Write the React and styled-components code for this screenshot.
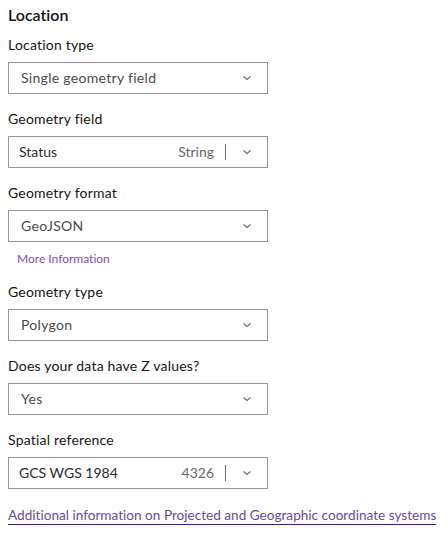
import React from 'react';
import styled, { createGlobalStyle } from 'styled-components';

const GlobalStyle = createGlobalStyle`
  body {
    margin: 0;
    background: #ffffff;
    font-family: Lato, "Noto Sans", sans-serif;
    font-variant-ligatures: none;
    color: #151515;
  }
`;

function Chevron() {
  return (
    <svg width="12" height="12" viewBox="0 0 12 12">
      <polyline points="2.5,4.5 6,7.5 9.5,4.5" fill="none" stroke="#6a6a6a" strokeWidth="1.1" />
    </svg>
  );
}

function Select({ value, hint, combo }) {
  return (
    <Box combo={combo}>
      <Value combo={combo}>{value}</Value>
      {hint && <Hint>{hint}</Hint>}
      {hint && <Divider />}
      <ChevronSlot><Chevron /></ChevronSlot>
    </Box>
  );
}

function Field({ label, children }) {
  return (
    <FieldWrap>
      <Label>{label}</Label>
      {children}
    </FieldWrap>
  );
}

function App() {
  return (
    <Panel>
      <GlobalStyle />
      <Heading>Location</Heading>
      <Field label="Location type">
        <Select value="Single geometry field" />
      </Field>
      <Field label="Geometry field">
        <Select value="Status" hint="String" combo />
      </Field>
      <Field label="Geometry format">
        <Select value="GeoJSON" />
        <SmallLink>More Information</SmallLink>
      </Field>
      <Field label="Geometry type">
        <Select value="Polygon" />
      </Field>
      <Field label="Does your data have Z values?">
        <Select value="Yes" />
      </Field>
      <Field label="Spatial reference">
        <Select value="GCS WGS 1984" hint="4326" combo />
        <WideLink>Additional information on Projected and Geographic coordinate systems</WideLink>
      </Field>
    </Panel>
  );
}

const Panel = styled.div`
  display: flex;
  flex-direction: column;
  gap: 15px;
  padding: 5px 8px;
  width: 448px;
  box-sizing: border-box;
`;

const Heading = styled.h2`
  margin: 0 0 -5px;
  font-size: 16px;
  line-height: 20px;
  font-weight: 600;
  color: #151515;
`;

const FieldWrap = styled.div`
  display: flex;
  flex-direction: column;
  align-items: flex-start;
`;

const Label = styled.div`
  font-size: 14px;
  line-height: 20px;
  letter-spacing: 0.2px;
  margin-bottom: 7px;
  color: #151515;
`;

const Box = styled.div`
  display: flex;
  align-items: center;
  width: 260px;
  height: 32px;
  box-sizing: border-box;
  border: 1px solid #949494;
  padding-left: ${p => (p.combo ? '10px' : '12px')};
  padding-bottom: 1px;
  font-size: 14px;
`;

const Value = styled.span`
  flex: 1;
  color: ${p => (p.combo ? '#2b2b2b' : '#4a4a4a')};
  letter-spacing: ${p => (p.combo ? '0' : '0.3px')};
  white-space: nowrap;
`;

const Hint = styled.span`
  color: #6a6a6a;
`;

const Divider = styled.span`
  width: 1px;
  height: 16px;
  background: #6a6a6a;
  margin-left: 11px;
`;

const ChevronSlot = styled.span`
  display: flex;
  align-items: center;
  justify-content: center;
  width: 41px;
  height: 100%;
`;

const SmallLink = styled.a`
  font-size: 12px;
  line-height: 16px;
  margin-top: 9px;
  padding-left: 9px;
  color: #7b4fb8;
  cursor: pointer;
`;

const WideLink = styled.a`
  font-size: 13.6px;
  line-height: 20px;
  margin-top: 16px;
  color: #6b4aa0;
  text-decoration: underline;
  text-decoration-color: #3f1f6e;
  text-underline-offset: 4px;
  white-space: nowrap;
  cursor: pointer;
`;

export default App;
